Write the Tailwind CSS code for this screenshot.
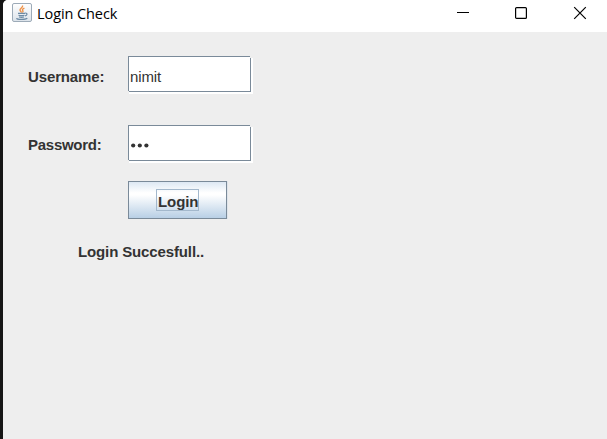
<!DOCTYPE html>
<html lang="en">
<head>
<meta charset="utf-8">
<title>Login Check</title>
<script src="https://cdn.jsdelivr.net/npm/@tailwindcss/browser@4"></script>
</head>
<body class="h-screen w-screen overflow-hidden bg-[#151515]">
<div class="ml-[3px] flex h-full flex-col overflow-hidden rounded-tl-[5px] bg-[#eeeeee] font-['Liberation_Sans',Arial,sans-serif] text-[15px] text-[#333333]">
  <header class="flex h-8 shrink-0 items-start bg-white text-black">
    <svg class="mt-[3px] ml-[9px] h-5 w-5 shrink-0" viewBox="0 0 20 20" fill="none">
      <defs><linearGradient id="tile" x2="0" y2="1"><stop stop-color="#ffffff"/><stop offset="1" stop-color="#dce3ea"/></linearGradient></defs>
      <rect x=".5" y=".5" width="19" height="18" rx="1.5" fill="url(#tile)" stroke="#9dabb8"/>
      <path d="M10.5 2.5C11.5 4.5 7.5 5.2 8 7.2C8.2 8.2 9.4 8.6 9.3 9.6M12.4 5.2C10 6.2 10.3 7 10.9 7.8C11.3 8.5 10.8 9 10.4 9.5" stroke="#ef9145" stroke-width="1.4"/>
      <path d="M6 10.4H13M6.5 12.2Q9.5 13.2 12.5 12.2M7 14Q9.5 14.8 12 14M13.2 10.2C16 9.8 15.3 12.6 13 12.8M4.5 15.3C5 16.8 13.5 16.8 15.3 15.2" stroke="#6d8ba5" stroke-width="1.2"/>
    </svg>
    <h1 class="ml-[5px] mt-[4px] font-['Open_Sans','Noto_Sans',sans-serif] text-[14.5px] leading-5 tracking-[-0.08px] whitespace-nowrap">Login Check</h1>
    <div class="mt-[6px] mr-5 ml-auto flex">
      <svg class="mr-[44px] h-[14px] w-[14px]" viewBox="0 0 14 14"><path d="M1 6.5H13" stroke="black"/></svg>
      <svg class="mr-[45px] h-[14px] w-[14px]" viewBox="0 0 14 14"><rect x="1.6" y="1.6" width="10.8" height="10.8" rx="1" fill="none" stroke="black" stroke-width="1.2"/></svg>
      <svg class="h-[14px] w-[14px]" viewBox="0 0 14 14"><path d="M1.2 1.2L12.8 12.8M12.8 1.2L1.2 12.8" stroke="black" stroke-width="1.2"/></svg>
    </div>
  </header>
  <main class="pl-[25px] pt-6">
    <div class="flex h-[38px]">
      <label class="w-[100px] pt-[11px] font-bold leading-5 tracking-[-0.13px]">Username:</label>
      <div class="relative h-[38px] w-[125px] border-r-2 border-b-2 border-white">
        <div class="h-9 w-[123px] border border-[#7a8a99] bg-white pt-[10px] pl-px leading-5 tracking-[-0.1px]">nimit</div>
        <span class="absolute top-0 left-[122px] h-[2px] w-[3px] bg-[#eeeeee]"></span>
        <span class="absolute top-[35px] left-0 h-[3px] w-px bg-[#eeeeee]"></span>
      </div>
    </div>
    <div class="mt-[31px] flex h-[38px]">
      <label class="w-[100px] pt-[10px] font-bold leading-5 tracking-[-0.27px]">Password:</label>
      <div class="relative h-[38px] w-[125px] border-r-2 border-b-2 border-white">
        <div class="h-9 w-[123px] border border-[#7a8a99] bg-white pt-[15px] pl-px">
          <svg class="h-[10px] w-[24px]" viewBox="0 0 24 10" fill="#333333"><circle cx="3.2" cy="4.5" r="2.1"/><circle cx="9.8" cy="4.5" r="2.1"/><circle cx="16.4" cy="4.5" r="2.1"/></svg>
        </div>
        <span class="absolute top-0 left-[122px] h-[2px] w-[3px] bg-[#eeeeee]"></span>
        <span class="absolute top-[35px] left-0 h-[3px] w-px bg-[#eeeeee]"></span>
      </div>
    </div>
    <button class="mt-[18px] ml-[100px] flex h-[38px] w-[99px] items-start justify-center border border-[#7a8a99] bg-[linear-gradient(#dde8f3_0%,#ffffff_30%,#ffffff_36%,#b8cfe5_100%)] pt-[7px] font-bold shadow-[1px_0_0_#dfe5eb]">
      <span class="h-[22px] w-[43px] border border-[#a3b8cc] pt-[2px] pl-px text-left leading-5 tracking-[-0.1px]">Login</span>
    </button>
    <p class="mt-[23px] ml-[50px] font-bold leading-5 tracking-[-0.13px]">Login Succesfull..</p>
  </main>
</div>
</body>
</html>
